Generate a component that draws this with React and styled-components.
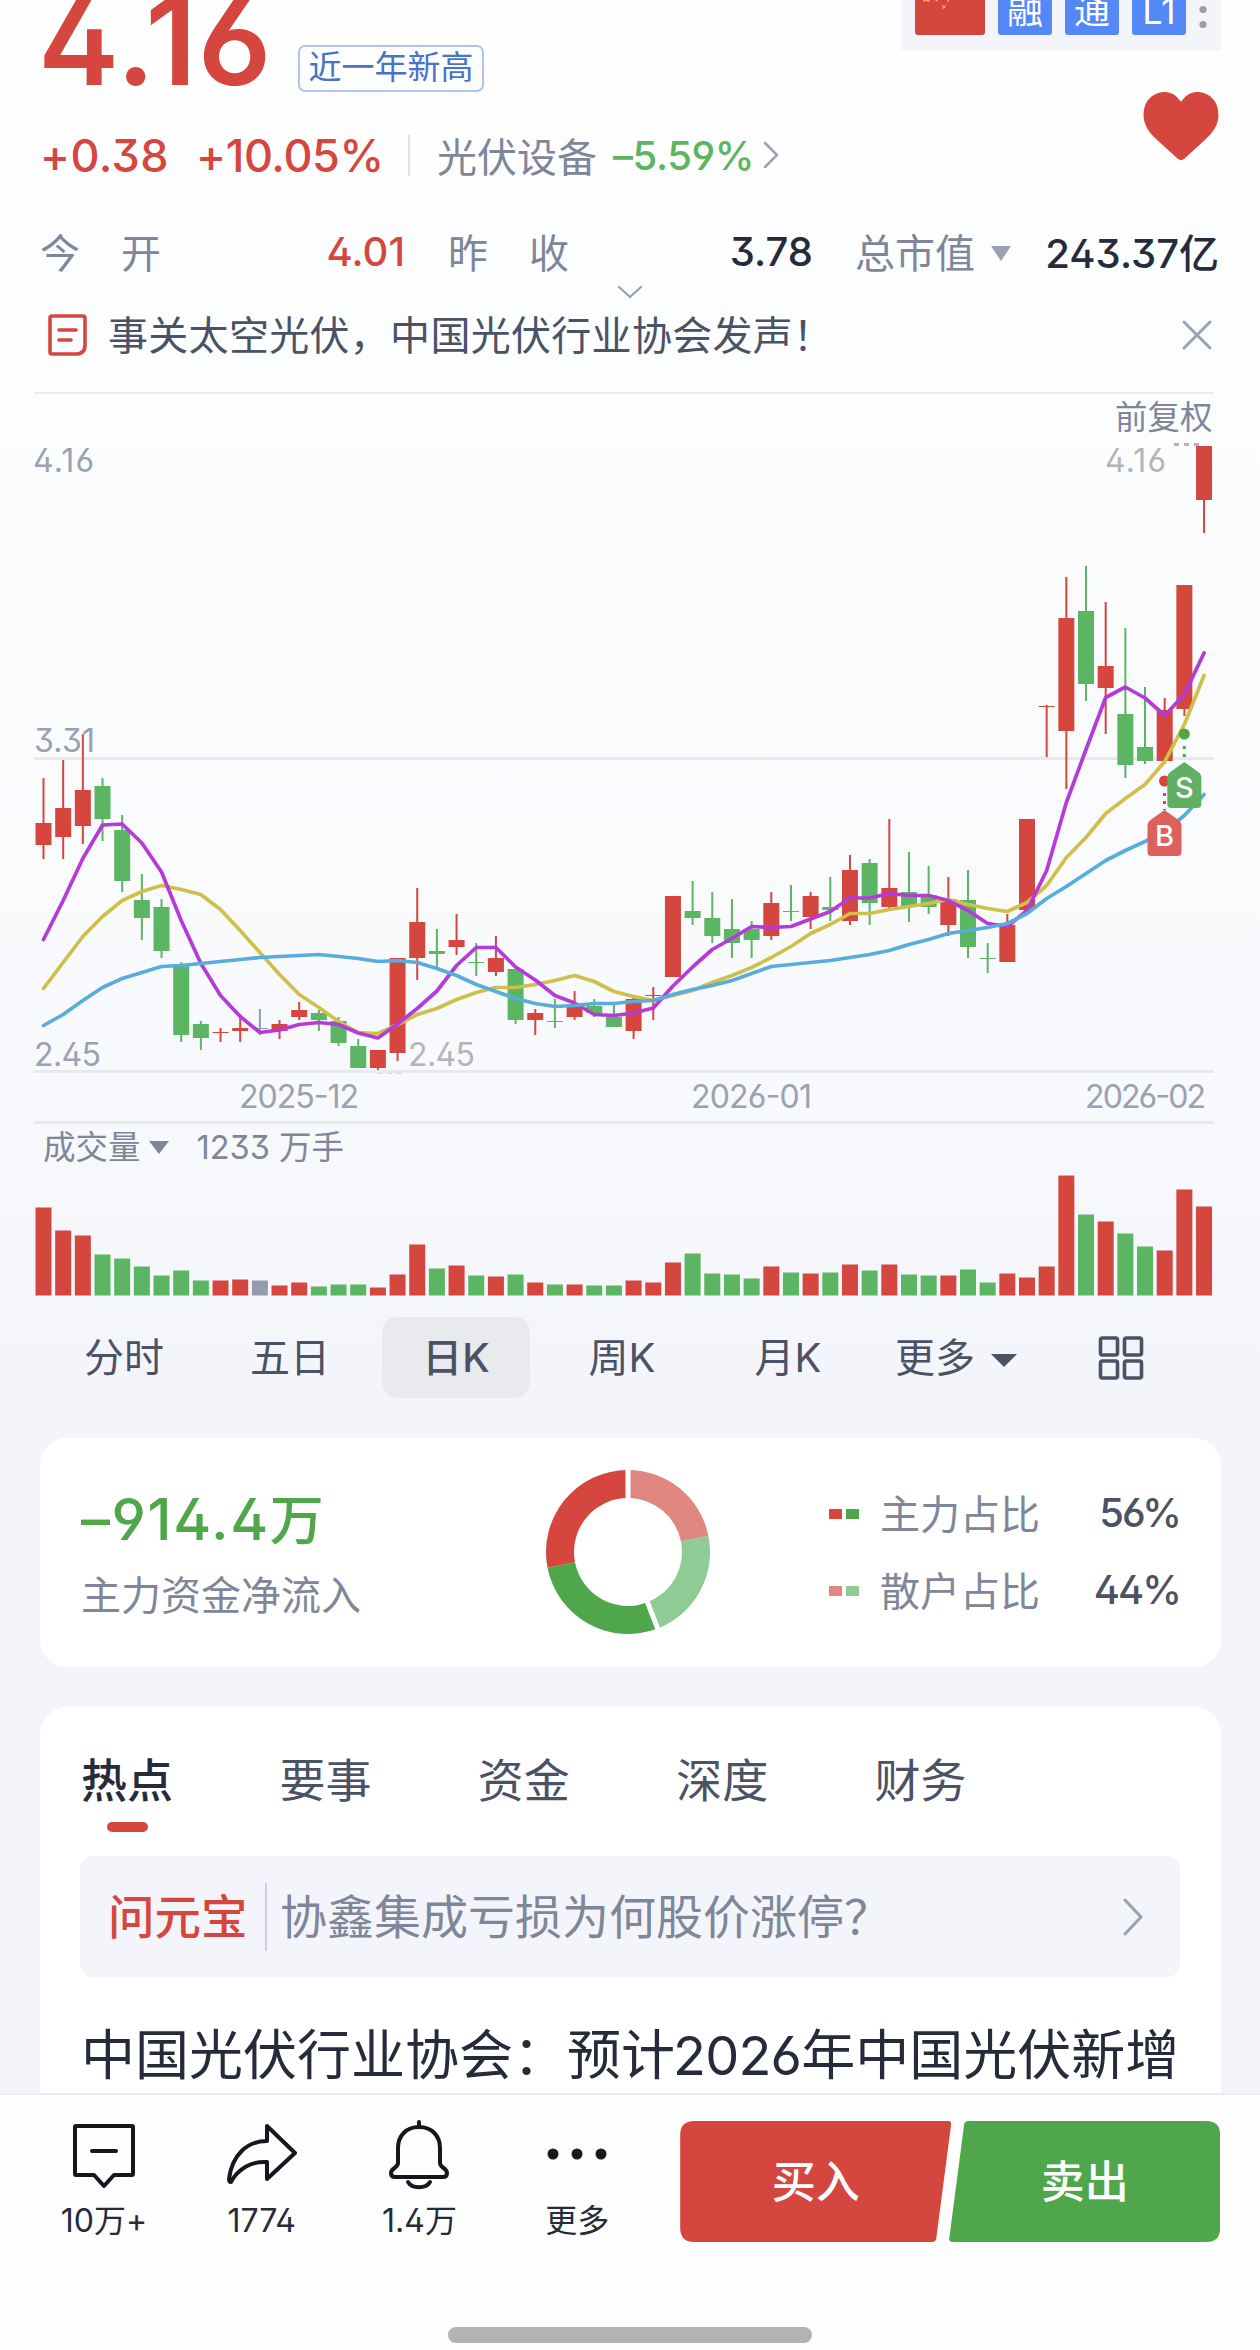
import React from 'react'
import styled, { createGlobalStyle } from 'styled-components'

const RED = '#d5463f'
const GREEN = '#5cb562'
const DEEP_GREEN = '#50a74b'
const GREY = '#7f869a'
const LIGHT_GREY = '#9aa1b2'
const INK = '#262b3c'
const SLATE = '#4b5265'

const NUM_FONT = "Inter, 'Noto Sans CJK SC', sans-serif"

const GlobalStyle = createGlobalStyle`
    body {
        margin: 0;
        background-color: #fefefe;
        font-family: ${NUM_FONT};
        font-feature-settings: 'ss01';
    }
    * {
        box-sizing: border-box;
    }
`

const StyledPage = styled.div`
    display: flex;
    flex-direction: column;
    width: 1260px;
    height: 2350px;
    overflow: hidden;
    background: linear-gradient(#fefefe 0, #fcfdfe 400px, #f7f9fc 1100px, #f4f5fa 1400px);
    color: ${INK};
    white-space: nowrap;
`

const StyledTopRow = styled.div`
    display: flex;
    height: 120px;
    padding: 0 39px 0 38px;
`

const StyledPrice = styled.div`
    width: 260px;
    margin-top: -20px;
    font-size: 122px;
    line-height: 1;
    font-weight: 600;
    letter-spacing: 1px;
    color: ${RED};
`

const StyledTag = styled.div`
    width: 186px;
    height: 47px;
    margin-top: 45px;
    border: 2px solid #b0c5e8;
    border-radius: 7px;
    text-align: center;
    font-size: 33px;
    line-height: 41px;
    color: #4774ca;
`

const StyledBadges = styled.div`
    display: flex;
    gap: 13px;
    width: 320px;
    height: 50px;
    margin-left: auto;
    padding-left: 14px;
    background-color: #f4f5fa;
`

const StyledFlag = styled.svg`
    width: 70px;
    height: 35px;
    border-radius: 0 0 3px 3px;
    background-color: ${RED};
`

const StyledBadge = styled.div`
    width: 54px;
    height: 35px;
    overflow: hidden;
    border-radius: 0 0 3px 3px;
    background-color: #5588f7;
    color: #fff;
    text-align: center;
    font-size: 36px;
    line-height: 22px;
`

const StyledChangeRow = styled.div`
    display: flex;
    align-items: center;
    height: 70px;
    padding: 0 39px 0 40px;
`

const StyledChange = styled.span`
    width: ${({ width }) => width}px;
    font-size: ${({ size }) => size || 45}px;
    font-weight: 500;
    letter-spacing: ${({ spacing }) => spacing || 0}px;
    color: ${({ color }) => color || RED};
`

const StyledSplit = styled.span`
    width: 2px;
    height: ${({ height }) => height}px;
    background-color: ${({ color }) => color || '#dfe1e6'};
`

const StyledSector = styled.span`
    width: 176px;
    margin-left: 27px;
    font-size: 40px;
    color: ${GREY};
`

const StyledHeart = styled.svg`
    width: 76px;
    height: 69px;
    margin: -58px 2px 0 auto;
`

const StyledStats = styled.div`
    display: grid;
    grid-template-columns: 365px 43px 365px 42px 364px;
    align-items: center;
    height: 68px;
    margin: 28px 0 0 40px;
    padding-bottom: 2px;
    font-size: 40px;
`

const StyledStat = styled.div`
    display: flex;
    align-items: center;
    justify-content: space-between;
    grid-column: ${({ column }) => column};
`

const StyledStatLabel = styled.span`
    display: flex;
    align-items: center;
    gap: ${({ gap }) => gap}px;
    color: ${GREY};
    svg {
        margin-top: 4px;
    }
`

const StyledStatValue = styled.span`
    font-weight: 500;
    color: ${({ color }) => color || INK};
`

const StyledExpand = styled.div`
    display: flex;
    justify-content: center;
    height: 12px;
    padding-right: 1px;
`

const StyledNews = styled.div`
    display: flex;
    align-items: center;
    height: 96px;
    margin: 0 46px 0 34px;
    padding: 0 1px 20px 13px;
    border-bottom: 2px solid #ebedf0;
    font-size: 40px;
    letter-spacing: 0.3px;
    color: ${SLATE};
`

const StyledNewsText = styled.span`
    flex: 1;
    margin: -5px 0 0 20px;
`

const StyledChart = styled.svg`
    display: block;
    flex-shrink: 0;
    width: 1180px;
    margin-left: 34px;
    font-family: ${NUM_FONT};
`

const StyledVolumeLabel = styled.div`
    display: flex;
    align-items: center;
    height: 41px;
    padding: 0 0 5px 43px;
    font-size: 32.5px;
    color: ${GREY};
    svg {
        margin: 7px 28px 0 8px;
    }
`

const StyledPeriods = styled.div`
    display: flex;
    height: 81px;
    margin: 21px 0 40px 50px;
    gap: 18px;
`

const StyledPeriod = styled.div`
    display: flex;
    align-items: center;
    justify-content: center;
    gap: 16px;
    width: ${({ width }) => width || 148}px;
    padding-bottom: ${({ icon }) => (icon ? 0 : 5)}px;
    border-radius: 15px;
    background-color: ${({ active }) => (active ? '#e9eaee' : 'transparent')};
    font-size: 40px;
    font-weight: ${({ active }) => (active ? 500 : 400)};
    color: ${SLATE};
    svg {
        margin-top: ${({ icon }) => (icon ? 0 : 10)}px;
    }
`

const StyledCard = styled.section`
    flex-shrink: 0;
    margin: 0 39px 40px 40px;
    border-radius: 27px;
    background-color: #fff;
`

const StyledFlowCard = styled(StyledCard)`
    display: flex;
    height: 229px;
    padding: 0 41px 0 41px;
`

const StyledFlowText = styled.div`
    width: 464px;
    padding-top: 42px;
    font-size: 40px;
    line-height: 76px;
    color: ${GREY};
`

const StyledFlowValue = styled.div`
    height: 78px;
    font-size: 54px;
    font-weight: 500;
    line-height: 78px;
    color: ${DEEP_GREEN};
    em {
        font-size: 58px;
        font-style: normal;
        letter-spacing: 1.6px;
    }
`

const StyledDonut = styled.svg`
    width: 166px;
    height: 166px;
    margin-top: 31px;
`

const StyledLegend = styled.div`
    display: flex;
    flex-direction: column;
    margin-left: auto;
    padding-top: 37px;
    width: 351px;
`

const StyledLegendRow = styled.div`
    display: flex;
    align-items: center;
    height: 77px;
    font-size: 40px;
    color: ${GREY};
    b {
        margin: -2px 0 0 auto;
        font-weight: 500;
        letter-spacing: -2px;
        color: ${SLATE};
    }
    span {
        margin: -3px 0 0 17px;
    }
`

const StyledSwatch = styled.i`
    width: 13px;
    height: 10px;
    margin-right: 4px;
    background-color: ${({ color }) => color};
`

const StyledFeedCard = styled(StyledCard)`
    height: 386px;
    margin-bottom: 0;
    padding: 40px 41px 0 40px;
    border-radius: 27px 27px 0 0;
    overflow: hidden;
`

const StyledFeedTabs = styled.div`
    display: flex;
    height: 109px;
    margin-left: -1px;
`

const StyledFeedTab = styled.div`
    display: flex;
    flex-direction: column;
    align-items: center;
    width: 96px;
    margin-right: 102.4px;
    font-size: 46px;
    line-height: 66px;
    font-weight: ${({ active }) => (active ? 500 : 400)};
    color: ${({ active }) => (active ? INK : SLATE)};
    &::after {
        content: '';
        width: 41px;
        height: 10px;
        margin-top: 9px;
        border-radius: 5px;
        background-color: ${({ active }) => (active ? RED : 'transparent')};
    }
`

const StyledAsk = styled.div`
    display: flex;
    align-items: center;
    height: 121px;
    padding: 0 36px 0 28px;
    border-radius: 13px;
    background-color: #f4f5fa;
    font-size: 47px;
    color: ${GREY};
`

const StyledAskName = styled.span`
    width: 157px;
    margin-top: -6px;
    font-size: 46.5px;
    font-weight: 500;
    color: ${RED};
`

const StyledAskText = styled.span`
    flex: 1;
    margin: -6px 0 0 13px;
`

const StyledHeadline = styled.div`
    margin: 39px 0 0 1px;
    font-size: 54px;
    line-height: 80px;
    em {
        margin-left: -2px;
        font-style: normal;
        letter-spacing: -0.8px;
    }
`

const StyledBottomBar = styled.footer`
    display: flex;
    flex-direction: column;
    flex-shrink: 0;
    height: 257px;
    border-top: 2px solid #eaecf0;
    background-color: #fefefe;
`

const StyledActions = styled.div`
    display: flex;
    height: 149px;
    padding: 26px 0 0 25px;
`

const StyledAction = styled.div`
    display: flex;
    flex-direction: column;
    align-items: center;
    width: 157.8px;
    font-size: 32px;
    line-height: 60px;
    svg {
        height: 70px;
        overflow: visible;
    }
`

const StyledTrade = styled.button`
    width: 271px;
    height: 121px;
    margin-left: ${({ offset }) => offset}px;
    padding: 0 0 5px;
    border: 0;
    background-color: ${({ color }) => color};
    clip-path: path('${({ shape }) => shape}');
    font-family: inherit;
    font-size: 44px;
    font-weight: 500;
    color: #fff;
`

const StyledHomeBar = styled.div`
    width: 364px;
    height: 16px;
    margin: 83px auto 0;
    border-radius: 8px;
    background-color: #b3b3b3;
`

// kind, body top, body bottom, high, low, volume
const candles = [
    ['r', 823, 845, 778, 859, 88],
    ['r', 808, 837, 760, 859, 65],
    ['r', 790, 826, 734, 844, 60],
    ['g', 786, 819, 778, 841, 41],
    ['g', 830, 881, 815, 892, 37],
    ['g', 900, 918, 874, 940, 29],
    ['g', 907, 951, 899, 958, 20],
    ['g', 965, 1035, 962, 1042, 25],
    ['g', 1024, 1038, 1021, 1050, 15],
    ['r', 1032, 1033, 1028, 1042, 15],
    ['r', 1028, 1031, 1014, 1042, 16],
    ['n', 1028, 1029, 1009, 1035, 15],
    ['r', 1024, 1031, 1020, 1039, 10],
    ['r', 1010, 1017, 1002, 1020, 13],
    ['g', 1013, 1020, 1010, 1031, 9],
    ['g', 1021, 1043, 1017, 1046, 11],
    ['g', 1046, 1068, 1039, 1068, 11],
    ['r', 1050, 1068, 1050, 1070, 8],
    ['r', 958, 1053, 958, 1061, 21],
    ['r', 922, 958, 888, 980, 51],
    ['g', 951, 954, 929, 968, 27],
    ['r', 940, 947, 914, 955, 30],
    ['g', 962, 963, 943, 976, 20],
    ['r', 958, 972, 936, 976, 19],
    ['g', 969, 1020, 969, 1024, 21],
    ['r', 1013, 1020, 1009, 1035, 13],
    ['g', 1021, 1022, 999, 1028, 11],
    ['r', 1006, 1017, 991, 1020, 11],
    ['g', 1006, 1013, 999, 1017, 10],
    ['g', 1017, 1027, 1004, 1027, 10],
    ['r', 999, 1031, 997, 1039, 15],
    ['r', 995, 996, 987, 1020, 13],
    ['r', 896, 977, 896, 977, 33],
    ['g', 911, 918, 881, 925, 42],
    ['g', 918, 936, 892, 943, 22],
    ['g', 929, 943, 899, 958, 21],
    ['g', 929, 940, 921, 958, 17],
    ['r', 903, 936, 892, 940, 29],
    ['g', 911, 912, 885, 921, 23],
    ['r', 896, 917, 892, 929, 22],
    ['g', 907, 910, 877, 921, 23],
    ['r', 870, 921, 855, 925, 31],
    ['g', 863, 903, 859, 925, 25],
    ['r', 888, 907, 819, 909, 31],
    ['g', 892, 907, 852, 922, 21],
    ['g', 895, 907, 866, 914, 20],
    ['r', 899, 925, 877, 936, 20],
    ['g', 900, 947, 870, 958, 26],
    ['g', 958, 959, 943, 973, 13],
    ['r', 925, 962, 914, 962, 22],
    ['r', 819, 910, 819, 910, 18],
    ['r', 706, 707, 705, 757, 29],
    ['r', 618, 731, 577, 789, 120],
    ['g', 611, 684, 566, 701, 81],
    ['r', 666, 688, 602, 734, 74],
    ['g', 714, 765, 628, 778, 62],
    ['g', 747, 761, 687, 764, 49],
    ['r', 710, 761, 698, 764, 45],
    ['r', 585, 709, 585, 716, 106],
    ['r', 446, 500, 446, 533, 89],
]

const averages = [
    {
        color: '#cfc04a',
        values: [
            988, 962, 936, 916, 900, 891, 885, 889, 894, 909, 930, 952, 974, 994, 1007, 1021, 1032,
            1033, 1024, 1014, 1008, 999, 992, 987, 987, 984, 980, 975, 981, 991, 996, 1000, 995,
            990, 982, 975, 967, 957, 946, 933, 924, 913, 913, 909, 906, 903, 899, 904, 908, 911,
            902, 885, 857, 837, 813, 798, 784, 761, 724, 675,
        ],
    },
    {
        color: '#b53bd8',
        values: [
            939, 900, 858, 824.5, 823.5, 842.5, 871.5, 920, 963, 995, 1016, 1032, 1029.5, 1024,
            1022, 1024, 1032.5, 1037.5, 1023.5, 1008, 990.5, 965, 947, 947, 966.5, 979.5, 995,
            1002.5, 1014, 1015, 1012.5, 1007.5, 985.5, 966.5, 949, 938, 926, 927, 926, 918.5, 911,
            897.5, 897.5, 893, 895, 895, 900, 910, 923, 926, 910, 870, 802, 749, 697, 686.5, 697.5,
            715, 694, 652.5,
        ],
    },
    {
        color: '#58addb',
        values: [
            1025, 1014, 1000, 987, 978, 972, 966, 965, 963, 961, 959, 957, 956, 955, 954, 956, 958,
            961, 960, 962, 968, 975, 984, 991, 998, 1003, 1006, 1005, 1003, 1003, 1001, 1000, 994,
            989, 985, 980, 973, 966, 964, 962, 960, 957, 954, 950, 944, 939, 933, 930, 927, 923,
            913, 898, 886, 873, 860, 850, 841, 831, 815, 794,
        ],
    },
]

const kindColors = { r: RED, g: GREEN, n: '#969bac' }
const candleX = (i) => 43.5 + i * 19.67

const Triangle = ({ width, height, color }) => (
    <svg width={width} height={height} viewBox="0 0 10 10" preserveAspectRatio="none">
        <path d="M0 0H10L5 10Z" fill={color} />
    </svg>
)

const Chevron = ({ width, height, d, stroke = 2.5 }) => (
    <svg width={width} height={height} fill="none" stroke={LIGHT_GREY} strokeWidth={stroke}>
        <path d={d} strokeLinecap="round" />
    </svg>
)

const ChartLabel = ({ x, y, width, color = LIGHT_GREY, children }) => (
    <text x={x} y={y} textLength={width} fontSize="32" fill={color}>
        {children}
    </text>
)

const Marker = ({ x, y, dotY, color, dotColor, letter }) => (
    <g>
        <circle cx={x} cy={dotY} r="5.5" fill={dotColor} />
        <path d={`M${x} ${dotY + 12}V${y}`} stroke={dotColor} strokeWidth="3" strokeDasharray="3 5" />
        <path
            d={`M${x} ${y}L${x + 14} ${y + 10}Q${x + 17} ${y + 12} ${x + 17} ${y + 15}V${y + 42}Q${x + 17} ${y + 46} ${x + 13} ${y + 46}H${x - 13}Q${x - 17} ${y + 46} ${x - 17} ${y + 42}V${y + 15}Q${x - 17} ${y + 12} ${x - 14} ${y + 10}Z`}
            fill={color}
        />
        <text x={x} y={y + 36} textAnchor="middle" fontSize="29" fontWeight="500" fill="#fff">
            {letter}
        </text>
    </g>
)

const KLineChart = () => (
    <StyledChart height="732" viewBox="34 394 1180 732">
        <path d="M34 758.5H1214M34 1071.5H1214M34 1122.5H1214" stroke="#e7e9ee" strokeWidth="3" />
        <text x="1115" y="429" fontSize="32.5" fill={GREY}>
            前复权
        </text>
        {candles.map(([kind, top, bottom, high, low], i) => (
            <g key={i} fill={kindColors[kind]}>
                <rect x={candleX(i) - 1} y={high} width="2" height={low - high} />
                <rect x={candleX(i) - 8} y={top} width="16" height={bottom - top} />
            </g>
        ))}
        <ChartLabel x="33" y="471.5" width="61">4.16</ChartLabel>
        <ChartLabel x="34" y="751.5" width="61">3.31</ChartLabel>
        <ChartLabel x="34" y="1065.5" width="67">2.45</ChartLabel>
        <ChartLabel x="1105" y="471.5" width="61" color="#b5b5b5">4.16</ChartLabel>
        <ChartLabel x="408" y="1065.5" width="67" color="#b5b5b5">2.45</ChartLabel>
        <ChartLabel x="239" y="1107.5" width="120">2025-12</ChartLabel>
        <ChartLabel x="691" y="1107.5" width="121">2026-01</ChartLabel>
        <ChartLabel x="1085" y="1107.5" width="121">2026-02</ChartLabel>
        <path d="M1174 444.5H1200" stroke="#b5b5b5" strokeWidth="3" strokeDasharray="5 5" />
        <path d="M377 1073.5H404" stroke="#d4d6da" strokeWidth="1" strokeDasharray="5 5" />
        {averages.map(({ color, values }) => (
            <polyline
                key={color}
                points={values.map((y, i) => `${candleX(i)},${y + 0.5}`).join(' ')}
                fill="none"
                stroke={color}
                strokeWidth="3.7"
                strokeLinejoin="round"
                strokeLinecap="round"
            />
        ))}
        <Marker x={1164.5} y={810} dotY={781} color="#dc605c" dotColor={RED} letter="B" />
        <Marker x={1184.3} y={762} dotY={734} color="#5fb062" dotColor={DEEP_GREEN} letter="S" />
    </StyledChart>
)

const VolumeChart = () => (
    <StyledChart height="129" viewBox="34 0 1180 129">
        {candles.map(([kind, , , , , volume], i) => (
            <rect
                key={i}
                x={candleX(i) - 8}
                y={128.5 - volume}
                width="16"
                height={volume}
                fill={kindColors[kind]}
            />
        ))}
    </StyledChart>
)

const polar = (deg, r) => {
    const rad = (deg * Math.PI) / 180
    return `${83 + r * Math.sin(rad)} ${83 - r * Math.cos(rad)}`
}

const slices = [
    { from: 0, to: 78.7, color: '#e18782' },
    { from: 78.7, to: 158.8, color: '#8fcc95' },
    { from: 158.8, to: 259, color: DEEP_GREEN },
    { from: 259, to: 360, color: RED },
]

const Donut = () => (
    <StyledDonut>
        {slices.map(({ from, to, color }) => (
            <path
                key={color}
                d={`M${polar(from, 82)}A82 82 0 0 1 ${polar(to, 82)}L${polar(to, 54)}A54 54 0 0 0 ${polar(from, 54)}Z`}
                fill={color}
            />
        ))}
        <path d={`M83 83L${polar(0, 84)}M83 83L${polar(158.8, 84)}`} stroke="#fff" strokeWidth="5" />
    </StyledDonut>
)

const periods = ['分时', '五日', '日K', '周K', '月K']
const feedTabs = ['热点', '要事', '资金', '深度', '财务']

const App = () => {
    return (
        <>
            <GlobalStyle />
            <StyledPage>
                <StyledTopRow>
                    <StyledPrice>4.16</StyledPrice>
                    <StyledTag>近一年新高</StyledTag>
                    <StyledBadges>
                        <StyledFlag viewBox="0 0 70 35">
                            <path
                                d="M8 0H15L14 2L11 1L9 2ZM20 0L23 0L22 2ZM26 4L29 6L31 5L30 8L27 9L28 7ZM32 0H34L33 3Z"
                                fill="#f3b04a"
                            />
                        </StyledFlag>
                        <StyledBadge>融</StyledBadge>
                        <StyledBadge>通</StyledBadge>
                        <StyledBadge>L1</StyledBadge>
                        <svg width="8" height="30" fill="#9b9dab">
                            <circle cx="4" cy="9.5" r="3.6" />
                            <circle cx="4" cy="24.5" r="3.6" />
                        </svg>
                    </StyledBadges>
                </StyledTopRow>
                <StyledChangeRow>
                    <StyledChange width={156} spacing={0.4}>
                        +0.38
                    </StyledChange>
                    <StyledChange width={212} spacing={-0.4}>
                        +10.05%
                    </StyledChange>
                    <StyledSplit height={41} />
                    <StyledSector>光伏设备</StyledSector>
                    <StyledChange width={149} size={40} color={GREEN} spacing={-0.4}>
                        –5.59%
                    </StyledChange>
                    <Chevron width={18} height={30} d="M3 3L15 15L3 27" />
                    <StyledHeart viewBox="0 0 76 70">
                        <path
                            d="M38 10C32 1 25 0 20 0C8 1 0 10 0 23C0 34 6 41 13 48L35 68Q38 70 41 68L63 48C70 41 76 34 76 23C76 10 68 1 56 0C51 0 44 1 38 10Z"
                            fill={RED}
                        />
                    </StyledHeart>
                </StyledChangeRow>
                <StyledStats>
                    <StyledStat column={1}>
                        <StyledStatLabel gap={41}>
                            <span>今</span>
                            <span>开</span>
                        </StyledStatLabel>
                        <StyledStatValue color={RED}>4.01</StyledStatValue>
                    </StyledStat>
                    <StyledStat column={3}>
                        <StyledStatLabel gap={41}>
                            <span>昨</span>
                            <span>收</span>
                        </StyledStatLabel>
                        <StyledStatValue>3.78</StyledStatValue>
                    </StyledStat>
                    <StyledStat column={5}>
                        <StyledStatLabel gap={16}>
                            总市值
                            <Triangle width={20} height={15} color={LIGHT_GREY} />
                        </StyledStatLabel>
                        <StyledStatValue>243.37亿</StyledStatValue>
                    </StyledStat>
                </StyledStats>
                <StyledExpand>
                    <Chevron width={26} height={14} d="M2 1L13 11L24 1" stroke={2.2} />
                </StyledExpand>
                <StyledNews>
                    <svg width="41" height="44" fill="none" stroke={RED} strokeWidth="3.6">
                        <path
                            d="M5 3H36Q38 3 38 5V32Q38 41 29 41H5Q3 41 3 39V5Q3 3 5 3Z"
                            strokeLinejoin="round"
                        />
                        <path d="M12 17H29M12 27H24" strokeLinecap="round" />
                    </svg>
                    <StyledNewsText>事关太空光伏，中国光伏行业协会发声！</StyledNewsText>
                    <svg width="32" height="32" fill="none" stroke={LIGHT_GREY} strokeWidth="3">
                        <path d="M3 3L29 29M29 3L3 29" strokeLinecap="round" />
                    </svg>
                </StyledNews>
                <KLineChart />
                <StyledVolumeLabel>
                    成交量
                    <Triangle width={20} height={13} color={GREY} />
                    1233 万手
                </StyledVolumeLabel>
                <VolumeChart />
                <StyledPeriods>
                    {periods.map((name) => (
                        <StyledPeriod key={name} active={name === '日K' ? 1 : 0}>
                            {name}
                        </StyledPeriod>
                    ))}
                    <StyledPeriod width={152}>
                        更多
                        <Triangle width={26} height={13} color={SLATE} />
                    </StyledPeriod>
                    <StyledPeriod width={142} icon="1">
                        <svg width="46" height="44" fill="none" stroke={SLATE} strokeWidth="3.6">
                            <rect x="2.5" y="2" width="17" height="17" rx="2" />
                            <rect x="26.5" y="2" width="17" height="17" rx="2" />
                            <rect x="2.5" y="25" width="17" height="17" rx="2" />
                            <rect x="26.5" y="25" width="17" height="17" rx="2" />
                        </svg>
                    </StyledPeriod>
                </StyledPeriods>
                <StyledFlowCard>
                    <StyledFlowText>
                        <StyledFlowValue>
                            <em>–914.4</em>万
                        </StyledFlowValue>
                        主力资金净流入
                    </StyledFlowText>
                    <Donut />
                    <StyledLegend>
                        <StyledLegendRow>
                            <StyledSwatch color={RED} />
                            <StyledSwatch color={DEEP_GREEN} />
                            <span>主力占比</span>
                            <b>56%</b>
                        </StyledLegendRow>
                        <StyledLegendRow>
                            <StyledSwatch color="#e18782" />
                            <StyledSwatch color="#8fcc95" />
                            <span>散户占比</span>
                            <b>44%</b>
                        </StyledLegendRow>
                    </StyledLegend>
                </StyledFlowCard>
                <StyledFeedCard>
                    <StyledFeedTabs>
                        {feedTabs.map((name, i) => (
                            <StyledFeedTab key={name} active={i === 0 ? 1 : 0}>
                                {name}
                            </StyledFeedTab>
                        ))}
                    </StyledFeedTabs>
                    <StyledAsk>
                        <StyledAskName>问元宝</StyledAskName>
                        <StyledSplit height={68} color="#cdd0da" />
                        <StyledAskText>协鑫集成亏损为何股价涨停？</StyledAskText>
                        <Chevron width={22} height={40} d="M3 3L19 20L3 37" stroke={3} />
                    </StyledAsk>
                    <StyledHeadline>
                        中国光伏行业协会：预计<em>2026</em>年中国光伏新增
                    </StyledHeadline>
                </StyledFeedCard>
                <StyledBottomBar>
                    <StyledActions>
                        <StyledAction>
                            <svg width="64" fill="none" stroke="#15171f" strokeWidth="4">
                                <path
                                    d="M4 5H60Q61 5 61 6V53Q61 54 60 54H42L32 65L22 54H4Q3 54 3 53V6Q3 5 4 5Z"
                                    strokeLinejoin="round"
                                />
                                <path d="M20 30H44" strokeLinecap="round" />
                            </svg>
                            10万+
                        </StyledAction>
                        <StyledAction>
                            <svg
                                width="70"
                                fill="none"
                                stroke="#15171f"
                                strokeWidth="4"
                                strokeLinejoin="round"
                            >
                                <path d="M40 5L68 32L40 58V41C24 40 11 48 4 61C2 61 2 60 2 58C5 34 20 20 40 20Z" />
                            </svg>
                            1774
                        </StyledAction>
                        <StyledAction>
                            <svg
                                width="60"
                                fill="none"
                                stroke="#15171f"
                                strokeWidth="4"
                                strokeLinecap="round"
                            >
                                <path d="M30 1V6M30 6C17 6 9 15 9 27V42C9 47 2 47 2 52Q2 56 6 56H54Q58 56 58 52C58 47 51 47 51 42V27C51 15 43 6 30 6Z" />
                                <path d="M19 61C23 68 37 68 41 61" />
                            </svg>
                            1.4万
                        </StyledAction>
                        <StyledAction>
                            <svg width="60" fill="#1a1a1a">
                                <circle cx="6" cy="33" r="5.5" />
                                <circle cx="30" cy="33" r="5.5" />
                                <circle cx="54" cy="33" r="5.5" />
                            </svg>
                            更多
                        </StyledAction>
                        <StyledTrade
                            offset={24}
                            color={RED}
                            shape="M14 0H268Q271 0 271 3L256 118Q255 121 252 121H14Q0 121 0 107V14Q0 0 14 0Z"
                        >
                            买入
                        </StyledTrade>
                        <StyledTrade
                            offset={-2}
                            color={DEEP_GREEN}
                            shape="M19 0H257Q271 0 271 14V107Q271 121 257 121H3Q0 121 0 118L15 3Q16 0 19 0Z"
                        >
                            卖出
                        </StyledTrade>
                    </StyledActions>
                    <StyledHomeBar />
                </StyledBottomBar>
            </StyledPage>
        </>
    )
}

export default App
